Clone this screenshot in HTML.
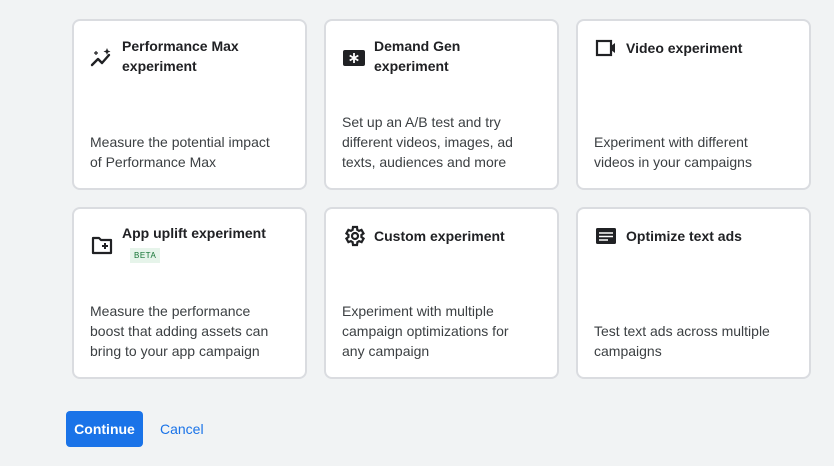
<!DOCTYPE html>
<html><head><style>
body{margin:0;width:834px;height:466px;background:#f1f3f4;font-family:"Liberation Sans",Arial,sans-serif;position:relative;overflow:hidden}
.card{position:absolute;width:235px;background:#fff;border:2px solid #dadce0;border-radius:8px;box-sizing:border-box}
.r1{top:19px;height:171px}.r2{top:207px;height:172px}
.c1{left:72px}.c2{left:324px}.c3{left:576px}
.hd{position:absolute;left:16px;top:15px;right:10px;display:flex;align-items:center}
.ic{width:24px;height:24px;flex:none;margin-right:8px}
.t{font-size:14px;font-weight:bold;color:#202124;line-height:20px}
.d{position:absolute;left:16px;width:192px;bottom:16px;font-size:14px;line-height:20px;color:#3c4043}
.beta{display:inline-block;margin:3px 0 0 8px;background:#e6f4ea;color:#137333;font-size:8px;padding:2px 4px;letter-spacing:.5px;line-height:11px;font-weight:normal}
.btn{position:absolute;left:66px;top:411px;width:77px;height:36px;background:#1a73e8;border-radius:4px;color:#fff;font-weight:bold;font-size:14px;line-height:36px;text-align:center}
.cancel{position:absolute;left:160px;top:411px;line-height:36px;font-size:14px;color:#1a73e8}
</style></head><body>
<div class="card r1 c1"><div class="hd" style="top:15px"><svg class="ic" viewBox="0 0 24 24" style="margin-top:4px"><path d="M2 19l6-6 4 4 7-8" stroke="#202124" stroke-width="2.4" fill="none" stroke-linecap="round" stroke-linejoin="round"/><path d="M4 7h4M6 5v4" stroke="#202124" stroke-width="1.2"/><path d="M17 2l1 2.5 2.5 1-2.5 1-1 2.5-1-2.5-2.5-1 2.5-1z" fill="#202124"/></svg><div class="t">Performance Max<br>experiment</div></div><div class="d">Measure the potential impact of Performance Max</div></div>
<div class="card r1 c2"><div class="hd" style="top:15px"><svg class="ic" viewBox="0 0 24 24" style="margin-top:4px"><rect x="1" y="4" width="22" height="16" rx="2" fill="#202124"/><path d="M12 7v10M7.7 9.5l8.6 5M7.7 14.5l8.6-5" stroke="#fff" stroke-width="1.8"/></svg><div class="t">Demand Gen<br>experiment</div></div><div class="d">Set up an A/B test and try different videos, images, ad texts, audiences and more</div></div>
<div class="card r1 c3"><div class="hd" style="top:15px"><svg class="ic" viewBox="0 0 24 24"><rect x="3" y="5" width="14" height="14" fill="none" stroke="#202124" stroke-width="2.2"/><path d="M17 10l4-3v10l-4-3z" fill="#202124"/></svg><div class="t">Video experiment</div></div><div class="d" style="width:175px">Experiment with different videos in your campaigns</div></div>
<div class="card r2 c1"><div class="hd" style="top:14px"><svg class="ic" viewBox="0 0 24 24" style="margin-top:4px"><path d="M3 5h6l2 2h10v13H3z" fill="none" stroke="#202124" stroke-width="2.2" stroke-linejoin="round"/><path d="M15 10v6M12 13h6" stroke="#202124" stroke-width="2"/></svg><div class="t">App uplift experiment<br><span class="beta">BETA</span></div></div><div class="d">Measure the performance boost that adding assets can bring to your app campaign</div></div>
<div class="card r2 c2"><div class="hd" style="top:15px"><svg class="ic" viewBox="0 0 24 24"><path d="M19.4 13a7.4 7.4 0 000-2l2.1-1.6-2-3.5-2.5 1a7 7 0 00-1.7-1L15 3h-4l-.4 2.9a7 7 0 00-1.7 1l-2.5-1-2 3.5L6.5 11a7.4 7.4 0 000 2l-2.1 1.6 2 3.5 2.5-1a7 7 0 001.7 1L11 21h4l.4-2.9a7 7 0 001.7-1l2.5 1 2-3.5z" fill="none" stroke="#202124" stroke-width="2.2"/><circle cx="13" cy="12" r="3" fill="none" stroke="#202124" stroke-width="2.2"/></svg><div class="t">Custom experiment</div></div><div class="d" style="width:185px">Experiment with multiple campaign optimizations for any campaign</div></div>
<div class="card r2 c3"><div class="hd" style="top:15px"><svg class="ic" viewBox="0 0 24 24"><rect x="2" y="4" width="20" height="16" rx="1.5" fill="#202124"/><path d="M5 9h14M5 12.5h14M5 16h9" stroke="#fff" stroke-width="1.6"/></svg><div class="t">Optimize text ads</div></div><div class="d">Test text ads across multiple campaigns</div></div>
<div class="btn">Continue</div><div class="cancel">Cancel</div>
</body></html>
